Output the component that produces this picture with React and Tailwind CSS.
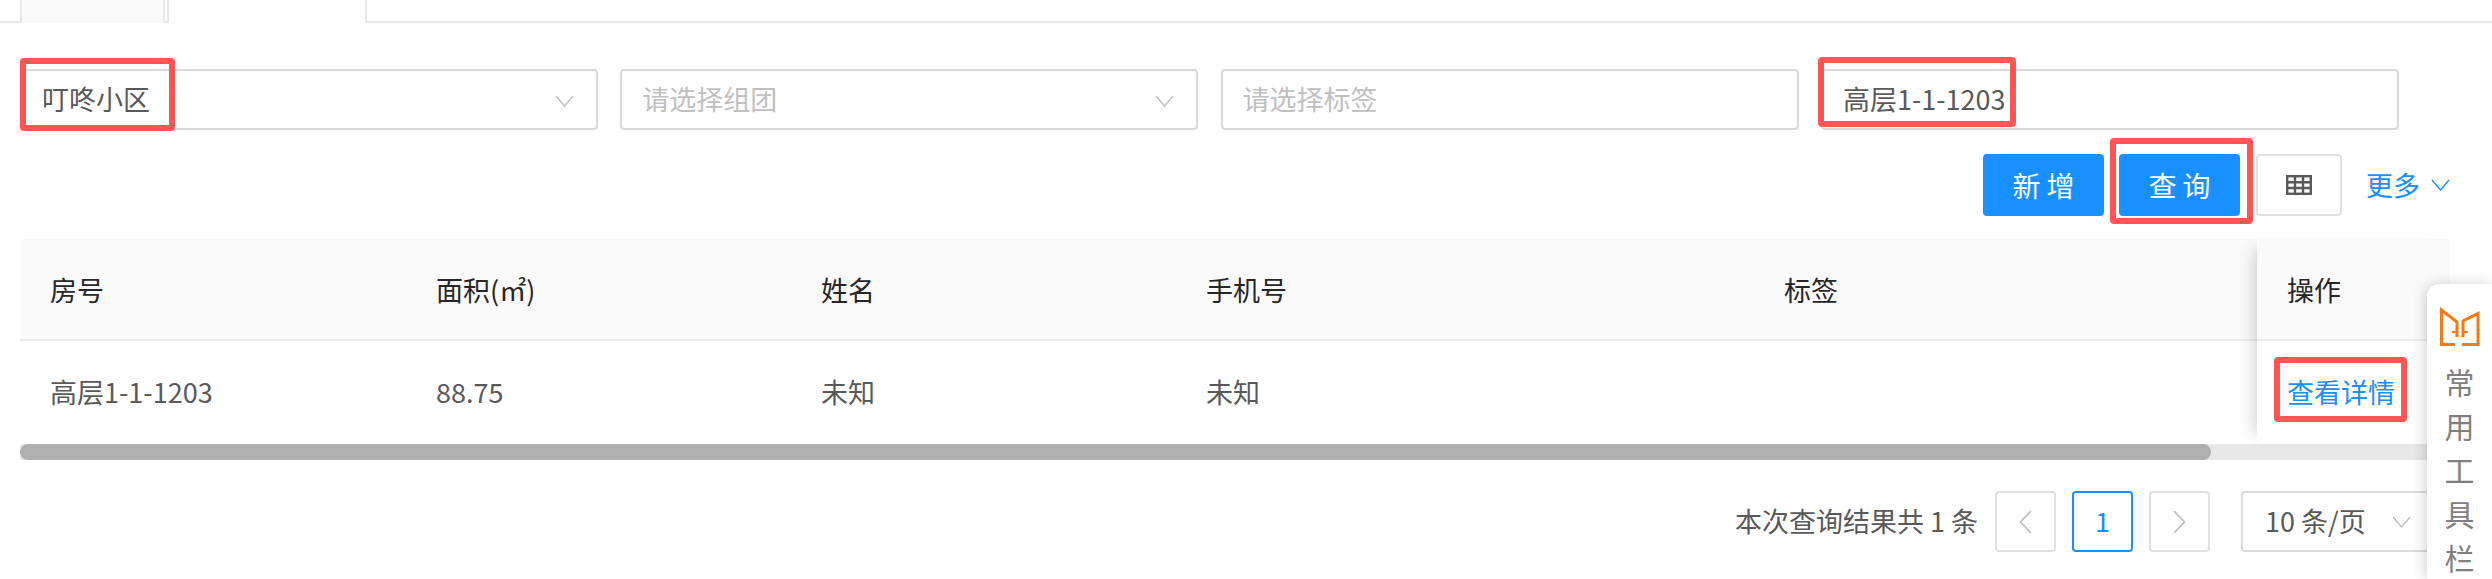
import React from "react";

const FONT = "font-['Noto_Sans_CJK_SC','Noto_Sans',sans-serif]";

function Chevron({ className = "" }) {
  return (
    <svg className={className} width="19" height="12" viewBox="0 0 19 12" fill="none" stroke="currentColor" strokeWidth="1.4">
      <path d="M1 1l8.5 10L18 1" />
    </svg>
  );
}

function Field({ text, placeholder, arrow }) {
  return (
    <div className="relative flex h-[61px] w-[578px] items-center justify-between rounded-[4px] border-2 border-[#d9d9d9] bg-white pl-[20px] pr-[22px]">
      <span className={`text-[27px] ${placeholder ? "text-[#bfbfbf]" : "text-[#595959]"}`}>{placeholder || text}</span>
      {arrow && <Chevron className="mt-[3px] text-[#bfbfbf]" />}
    </div>
  );
}

function Mark({ className }) {
  return <div className={`pointer-events-none absolute rounded-[4px] border-[6px] border-[#ff5555] ${className}`} />;
}

function Logo() {
  return (
    <svg width="40" height="40" viewBox="0 0 40 40" fill="none" stroke="#f97a12" strokeWidth="3">
      <path d="M15 37.5H1.5V3L17 15V30" />
      <path d="M22 37.5H38V6.5L23 14V30" />
      <path d="M12 25h5M23 25h5" strokeWidth="2" />
    </svg>
  );
}

function Cell({ children, head, className = "" }) {
  return (
    <div className={`flex items-center pl-[30px] text-[27px] ${head ? "h-[102px] border-b-2 border-[#ececec] bg-[#fafafa] pt-[2px] text-[#262626]" : "h-[103px] text-[#595959]"} ${className}`}>
      {children}
    </div>
  );
}

function PageBox({ children, active }) {
  return (
    <div className={`flex h-[61px] w-[61px] items-center justify-center rounded-[4px] border-2 bg-white text-[27px] ${active ? "border-[#1890ff] text-[#1890ff]" : "border-[#e1e1e1] text-[#bfbfbf]"}`}>
      {children}
    </div>
  );
}

export default function App() {
  const heads = ["房号", "面积(㎡)", "姓名", "手机号", "标签"];
  const row = ["高层1-1-1203", "88.75", "未知", "未知", ""];
  return (
    <div className={`relative h-[579px] w-[2492px] overflow-hidden bg-white ${FONT}`}>
      {/* Tabs */}
      <div className="flex h-[23px] border-b-2 border-[#e8e8e8] pl-[20px]">
        <div className="h-[23px] w-[145px] border-l-2 border-r-2 border-[#e8e8e8] bg-[#fafafa]" />
        <div className="ml-[2px] h-[23px] w-[200px] border-x-2 border-[#e8e8e8] bg-white" />
      </div>

      {/* Filters */}
      <div className="flex gap-[22.3px] pl-[20px] pt-[46px]">
        <div className="relative">
          <Field text="叮咚小区" arrow />
          <Mark className="left-0 top-[-11px] h-[73px] w-[155px]" />
        </div>
        <Field placeholder="请选择组团" arrow />
        <Field placeholder="请选择标签" />
        <div className="relative">
          <Field text="高层1-1-1203" />
          <Mark className="left-[-3px] top-[-12px] h-[70px] w-[198px]" />
        </div>
      </div>

      {/* Actions */}
      <div className="flex items-center justify-end pr-[42px] pt-[24px]">
        <button className="mr-[15px] h-[62px] w-[121px] rounded-[4px] bg-[#1890ff] pl-[6px] text-[28px] tracking-[6px] text-white">新增</button>
        <div className="relative mr-[16px]">
          <button className="block h-[62px] w-[121px] rounded-[4px] bg-[#1890ff] pl-[6px] text-[28px] tracking-[6px] text-white">查询</button>
          <Mark className="left-[-9px] top-[-16px] h-[86px] w-[143px]" />
        </div>
        <button className="mr-[24px] flex h-[62px] w-[86px] items-center justify-center rounded-[4px] border-2 border-[#e1e1e1] bg-white">
          <svg width="26" height="20" viewBox="0 0 26 20" fill="none" stroke="#595959" strokeWidth="2.4">
            <rect x="1.2" y="1.2" width="23.6" height="17.6" />
            <path d="M1 7.2h24M1 13h24M9 1v18M17 1v18" />
          </svg>
        </button>
        <div className="flex items-center gap-[11px] text-[27px] text-[#1890ff]">
          更多
          <Chevron />
        </div>
      </div>

      {/* Table */}
      <div className="relative ml-[20px] mt-[23px] w-[2430px]">
        <div className="grid grid-cols-[386px_385px_385px_578px_503px_193px]">
          {heads.map((h) => <Cell key={h} head>{h}</Cell>)}
          <div className="row-span-2 row-start-1 col-start-6 shadow-[-14px_0_14px_-10px_rgba(0,0,0,0.16)]">
            <Cell head>操作</Cell>
            <Cell className="text-[#1890ff]">
              <span className="relative text-[#1890ff]">
                查看详情
                <span className="pointer-events-none absolute left-[-13px] top-[-15px] h-[65px] w-[133px] rounded-[4px] border-[6px] border-[#ff5555]" />
              </span>
            </Cell>
          </div>
          {row.map((c, i) => <Cell key={i} className="row-start-2">{c}</Cell>)}
        </div>
        <div className="h-[16px] w-full bg-[#e8e8e8]">
          <div className="h-[16px] w-[2191px] rounded-full bg-[#b0b0b0]" />
        </div>
      </div>

      {/* Pagination */}
      <div className="flex items-center pl-[1735px] pt-[31px] text-[#595959]">
        <span className="mr-[17px] text-[27px]">本次查询结果共 1 条</span>
        <PageBox>
          <svg width="13" height="24" viewBox="0 0 13 24" fill="none" stroke="currentColor" strokeWidth="1.8"><path d="M12 1L1.5 12 12 23" /></svg>
        </PageBox>
        <div className="mx-[16px]"><PageBox active>1</PageBox></div>
        <PageBox>
          <svg width="13" height="24" viewBox="0 0 13 24" fill="none" stroke="currentColor" strokeWidth="1.8"><path d="M1 1l10.5 11L1 23" /></svg>
        </PageBox>
        <div className="ml-[31px] flex h-[61px] w-[200px] shrink-0 items-center rounded-[4px] border-2 border-[#dcdcdc] pl-[22px]">
          <span className="text-[27px]">10 条/页</span>
          <Chevron className="ml-[26px] text-[#bfbfbf]" />
        </div>
      </div>

      {/* Floating toolbar */}
      <div className="absolute left-[2427px] top-[284px] flex w-[65px] flex-col items-center rounded-tl-[12px] bg-white pt-[23px] shadow-[-2px_0_14px_rgba(0,0,0,0.18)]">
        <Logo />
        <div className="mt-[12px] flex flex-col items-center text-[30px] leading-[44px] text-[#808080]">
          <span>常</span>
          <span>用</span>
          <span>工</span>
          <span>具</span>
          <span>栏</span>
        </div>
      </div>
    </div>
  );
}
